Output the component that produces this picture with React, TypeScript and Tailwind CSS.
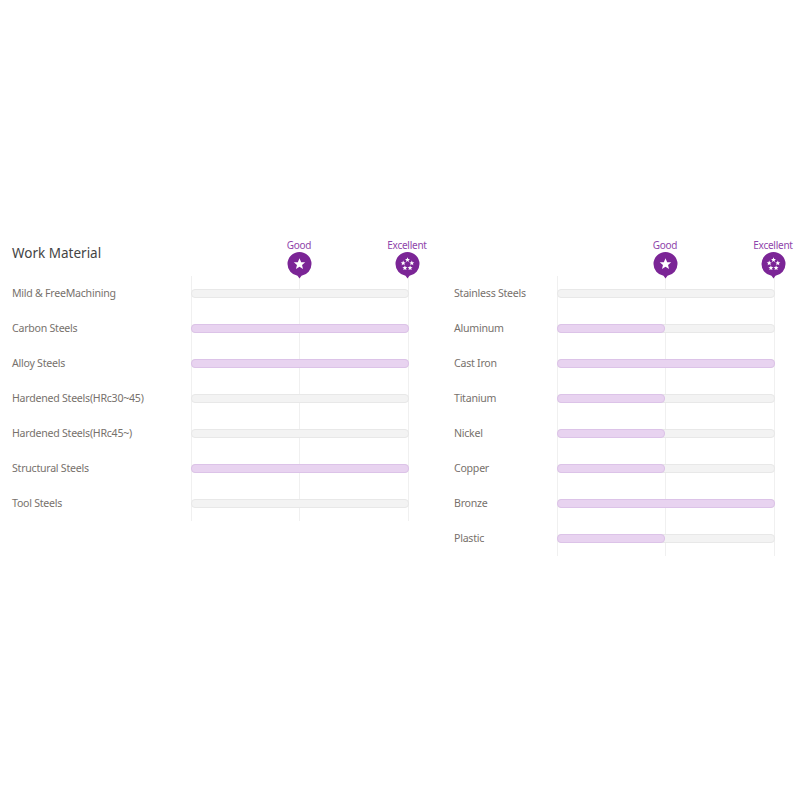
import React from 'react';

interface Row {
  name: string;
  level: 0 | 1 | 2;
}

const leftRows: Row[] = [
  { name: 'Mild & FreeMachining', level: 0 },
  { name: 'Carbon Steels', level: 2 },
  { name: 'Alloy Steels', level: 2 },
  { name: 'Hardened Steels(HRc30~45)', level: 0 },
  { name: 'Hardened Steels(HRc45~)', level: 0 },
  { name: 'Structural Steels', level: 2 },
  { name: 'Tool Steels', level: 0 },
];

const rightRows: Row[] = [
  { name: 'Stainless Steels', level: 0 },
  { name: 'Aluminum', level: 1 },
  { name: 'Cast Iron', level: 2 },
  { name: 'Titanium', level: 1 },
  { name: 'Nickel', level: 1 },
  { name: 'Copper', level: 1 },
  { name: 'Bronze', level: 2 },
  { name: 'Plastic', level: 1 },
];

const STAR = 'M0 -5.2 L1.5 -1.7 L5.2 -1.5 L2.3 0.9 L3.2 4.6 L0 2.6 L-3.2 4.6 L-2.3 0.9 L-5.2 -1.5 L-1.5 -1.7 Z';

function Pin({ label, many }: { label: string; many?: boolean }) {
  return (
    <div className="flex w-[60px] flex-col items-center">
      <span className="text-[10px] leading-[13px] tracking-[-0.25px] text-[#8f45ab]">{label}</span>
      <svg width="26" height="28" viewBox="-13.5 -12 26 28" className="block">
        <path d="M-12 0 A12 12 0 1 1 12 0 A12 12 0 0 1 2 11.8 L0 14.6 L-2 11.8 A12 12 0 0 1 -12 0 Z" fill="#7b2596" />
        {many ? (
          <g fill="#fff">
            <path d={STAR} transform="translate(0 -4.2) scale(0.48)" />
            <path d={STAR} transform="translate(-4.3 -0.9) scale(0.48)" />
            <path d={STAR} transform="translate(4.3 -0.9) scale(0.48)" />
            <path d={STAR} transform="translate(-2.6 3.9) scale(0.48)" />
            <path d={STAR} transform="translate(2.6 3.9) scale(0.48)" />
          </g>
        ) : (
          <path d={STAR} fill="#fff" transform="scale(1.1)" />
        )}
      </svg>
    </div>
  );
}

function Chart({ rows, labelWidth, title }: { rows: Row[]; labelWidth: string; title?: string }) {
  return (
    <div className="w-fit">
      <div className="relative z-10 -mr-[28px] flex h-[40px] items-start justify-between">
        <h3 className="pt-[7px] text-[13.5px] leading-[20px] text-[#444]">{title}</h3>
        <div className="flex gap-[48px] pt-[3px]">
          <Pin label="Good" />
          <Pin label="Excellent" many />
        </div>
      </div>
      <div className="relative">
        {/* guide lines behind the bars */}
        <div className="absolute inset-y-0 right-0 grid w-[218px] grid-cols-[108px_109px_1px]">
          <div className="border-l border-[#f0f0f0]" />
          <div className="border-l border-[#f0f0f0]" />
          <div className="border-l border-[#f0f0f0]" />
        </div>
        {rows.map((row) => (
          <div key={row.name} className="relative flex h-[35px] items-center">
            <div className={`${labelWidth} shrink-0 text-[10.6px] tracking-[-0.25px] text-[#77716c]`}>{row.name}</div>
            <div className="h-[9px] w-[218px] shrink-0 rounded-[4px] border border-[#e8e8e8] bg-[#f3f3f3]">
              {row.level === 2 && <div className="-m-px h-[9px] w-[218px] rounded-[4px] border border-[#dcc3e8] bg-[#e8d3f0]" />}
              {row.level === 1 && <div className="-m-px h-[9px] w-[108px] rounded-[4px] border border-[#dcc3e8] bg-[#e8d3f0]" />}
            </div>
          </div>
        ))}
      </div>
    </div>
  );
}

export default function App() {
  return (
    <div className="min-h-[800px] bg-white pt-[236px] font-['Noto_Sans',sans-serif]">
      <div className="flex">
        <div className="w-[442px] shrink-0 pl-3">
          <Chart rows={leftRows} labelWidth="w-[179px]" title="Work Material" />
        </div>
        <div className="pl-3">
          <Chart rows={rightRows} labelWidth="w-[103px]" />
        </div>
      </div>
    </div>
  );
}
